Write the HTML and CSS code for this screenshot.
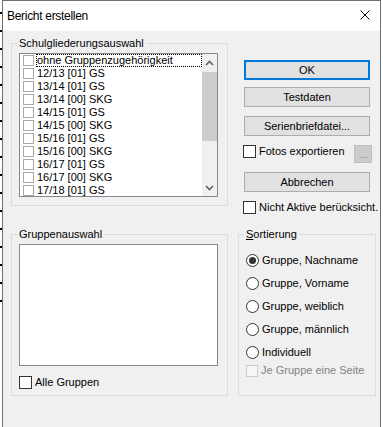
FILE: index.html
```html
<!DOCTYPE html>
<html lang="de">
<head>
<meta charset="utf-8">
<title>Bericht erstellen</title>
<link rel="stylesheet" href="styles.css">
</head>
<body>
<div class="screen">
  <div class="behind"></div>
  <div class="dialog">
    <div class="titlebar">
      <span class="title">Bericht erstellen</span>
      <svg class="close" width="10" height="10" viewBox="0 0 10 10"><path d="M0.5 0.5L9.5 9.5M9.5 0.5L0.5 9.5" stroke="#000" stroke-width="1" fill="none"/></svg>
    </div>
    <div class="body">
      <div class="col-left">
        <div class="group g1">
          <div class="gtitle">Schulgliederungsauswahl</div>
          <div class="listbox lb1">
            <div class="items">
              <div class="item"><span class="lcb"></span><span class="lbl focus">ohne Gruppenzugehörigkeit</span></div>
              <div class="item"><span class="lcb"></span><span class="lbl">12/13 [01] GS</span></div>
              <div class="item"><span class="lcb"></span><span class="lbl">13/14 [01] GS</span></div>
              <div class="item"><span class="lcb"></span><span class="lbl">13/14 [00] SKG</span></div>
              <div class="item"><span class="lcb"></span><span class="lbl">14/15 [01] GS</span></div>
              <div class="item"><span class="lcb"></span><span class="lbl">14/15 [00] SKG</span></div>
              <div class="item"><span class="lcb"></span><span class="lbl">15/16 [01] GS</span></div>
              <div class="item"><span class="lcb"></span><span class="lbl">15/16 [00] SKG</span></div>
              <div class="item"><span class="lcb"></span><span class="lbl">16/17 [01] GS</span></div>
              <div class="item"><span class="lcb"></span><span class="lbl">16/17 [00] SKG</span></div>
              <div class="item"><span class="lcb"></span><span class="lbl">17/18 [01] GS</span></div>
            </div>
            <div class="scrollbar">
              <div class="sb-btn"><svg width="9" height="6" viewBox="0 0 9 6"><path d="M1 5L4.5 1.5L8 5" stroke="#606060" stroke-width="1.6" fill="none"/></svg></div>
              <div class="sb-thumb"></div>
              <div class="sb-track"></div>
              <div class="sb-btn"><svg width="9" height="6" viewBox="0 0 9 6"><path d="M1 1L4.5 4.5L8 1" stroke="#606060" stroke-width="1.6" fill="none"/></svg></div>
            </div>
          </div>
        </div>
        <div class="group g2">
          <div class="gtitle">Gruppenauswahl</div>
          <div class="listbox lb2"></div>
          <label class="check c-alle"><span class="box"></span><span>Alle Gruppen</span></label>
        </div>
      </div>
      <div class="col-right">
        <button class="btn btn-default b-ok">OK</button>
        <button class="btn b-test">Testdaten</button>
        <button class="btn b-serien">Serienbriefdatei...</button>
        <div class="row-fotos">
          <label class="check"><span class="box"></span><span>Fotos exportieren</span></label>
          <button class="mini" disabled>...</button>
        </div>
        <button class="btn b-abbr">Abbrechen</button>
        <label class="check c-nicht"><span class="box"></span><span>Nicht Aktive berücksicht.</span></label>
        <div class="group g3">
          <div class="gtitle"><u>S</u>ortierung</div>
          <div class="radios">
            <label class="radio"><span class="circle on"></span><span>Gruppe, Nachname</span></label>
            <label class="radio"><span class="circle"></span><span>Gruppe, Vorname</span></label>
            <label class="radio"><span class="circle"></span><span>Gruppe, weiblich</span></label>
            <label class="radio"><span class="circle"></span><span>Gruppe, männlich</span></label>
            <label class="radio"><span class="circle"></span><span>Individuell</span></label>
          </div>
          <label class="check disabled c-je"><span class="box"></span><span>Je Gruppe eine Seite</span></label>
        </div>
      </div>
    </div>
  </div>
</div>
</body>
</html>
```
FILE: styles.css
```css
html, body {
  margin: 0;
  padding: 0;
  background: #ffffff;
  font-family: "Liberation Sans", Arial, sans-serif;
  font-size: 11px;
  color: #000;
}
.screen {
  display: flex;
  width: 383px;
  height: 427px;
  overflow: hidden;
}
.behind {
  width: 2px;
  flex: none;
  background-color: #fff;
  background-image: repeating-linear-gradient(to bottom, transparent 0 12px, #000 12px 14px, transparent 14px 18px);
  background-size: 2px 305px;
  background-repeat: no-repeat;
}
.dialog {
  width: 379px;
  height: 440px;
  flex: none;
  box-sizing: border-box;
  border: 1px solid #707070;
  border-bottom: none;
  background: #f0f0f0;
  display: flex;
  flex-direction: column;
}
.titlebar {
  height: 30px;
  background: #fff;
  display: flex;
  align-items: center;
  padding: 0 10px 0 4px;
  flex: none;
}
.title {
  font-size: 12px;
  letter-spacing: -0.3px;
  line-height: 30px;
  margin-top: -1px;
  flex: 1;
}
.close {
  display: block;
  margin-top: -2px;
}
.body {
  display: flex;
  padding: 0 4px 0 8px;
  gap: 10px;
}
.col-left {
  width: 217px;
  display: flex;
  flex-direction: column;
}
.col-right {
  width: 138px;
  display: flex;
  flex-direction: column;
}
.group {
  border: 1px solid #dcdcdc;
  display: flex;
  flex-direction: column;
}
.gtitle {
  align-self: flex-start;
  line-height: 13px;
  height: 13px;
  margin: -7px 0 0 -2px;
  padding: 0 2px;
  background: #f0f0f0;
}
.g1 {
  margin-top: 12px;
  padding: 0 9px 8px 7px;
}
.g2 {
  margin-top: 28px;
  padding: 0 9px 6px 7px;
}
.listbox {
  border: 1px solid #828790;
  background: #fff;
  box-sizing: border-box;
}
.lb1 {
  margin-top: 3px;
  height: 144px;
  display: flex;
  overflow: hidden;
}
.lb2 {
  margin-top: 3px;
  height: 122px;
}
.items {
  flex: 1;
  padding-left: 3px;
}
.item {
  height: 13px;
  display: flex;
  align-items: center;
}
.lcb {
  width: 11px;
  height: 11px;
  box-sizing: border-box;
  border: 1px solid #a8a8a8;
  background: #fff;
  flex: none;
}
.lbl {
  margin-left: 2px;
  padding-left: 1px;
  height: 13px;
  line-height: 13px;
  box-sizing: border-box;
  flex: 1;
  white-space: nowrap;
}
.lbl.focus {
  outline: 1px dotted #000;
  outline-offset: -1px;
}
.scrollbar {
  width: 15px;
  flex: none;
  background: #f0f0f0;
  display: flex;
  flex-direction: column;
}
.sb-btn {
  height: 17px;
  display: flex;
  align-items: center;
  justify-content: center;
  flex: none;
}
.sb-btn svg { display: block; }
.sb-thumb {
  margin-top: 1px;
  height: 69px;
  background: #cdcdcd;
  flex: none;
}
.sb-track { flex: 1; }
.check {
  display: flex;
  align-items: center;
  height: 13px;
  line-height: 13px;
  white-space: nowrap;
}
.check .box {
  width: 13px;
  height: 13px;
  box-sizing: border-box;
  border: 1px solid #333;
  background: #fff;
  margin-right: 3px;
  flex: none;
}
.check.disabled { color: #838383; }
.check.disabled .box {
  border-color: #cccccc;
  background: #f7f7f7;
  width: 12px;
  height: 12px;
}
.c-alle { margin-top: 10px; }
.btn {
  font-family: "Liberation Sans", Arial, sans-serif;
  font-size: 11px;
  color: #000;
  width: 126px;
  height: 20px;
  margin-left: 6px;
  padding: 0;
  box-sizing: border-box;
  border: 1px solid #adadad;
  background: #e1e1e1;
  border-radius: 0;
  line-height: 16px;
}
.btn-default { border: 2px solid #0078d7; }
.b-ok { margin-top: 29px; }
.b-test { margin-top: 7px; }
.b-serien { margin-top: 9px; }
.b-abbr { margin-top: 9px; }
.row-fotos {
  margin-top: 9px;
  height: 18px;
  display: flex;
  align-items: flex-start;
  padding-left: 5px;
  padding-right: 4px;
}
.row-fotos .check { flex: 1; }
.mini {
  width: 18px;
  height: 18px;
  padding: 0;
  box-sizing: border-box;
  border: 1px solid #bfbfbf;
  background: #cccccc;
  color: #8a8a8a;
  font-family: "Liberation Sans", Arial, sans-serif;
  font-size: 11px;
  line-height: 12px;
  border-radius: 0;
}
.c-nicht {
  margin-top: 9px;
  margin-left: 5px;
}
.g3 {
  margin-top: 20px;
  padding: 0 0 18px 7px;
}
.radios {
  margin-top: 13px;
  display: flex;
  flex-direction: column;
  gap: 10px;
}
.radio {
  display: flex;
  align-items: center;
  height: 13px;
  line-height: 13px;
  white-space: nowrap;
}
.circle {
  width: 13px;
  height: 13px;
  box-sizing: border-box;
  border: 1px solid #333;
  border-radius: 50%;
  background: #fff;
  margin-right: 3px;
  flex: none;
  display: flex;
  align-items: center;
  justify-content: center;
}
.circle.on::after {
  content: "";
  width: 7px;
  height: 7px;
  border-radius: 50%;
  background: #333;
}
.c-je { margin-top: 5px; }
```
